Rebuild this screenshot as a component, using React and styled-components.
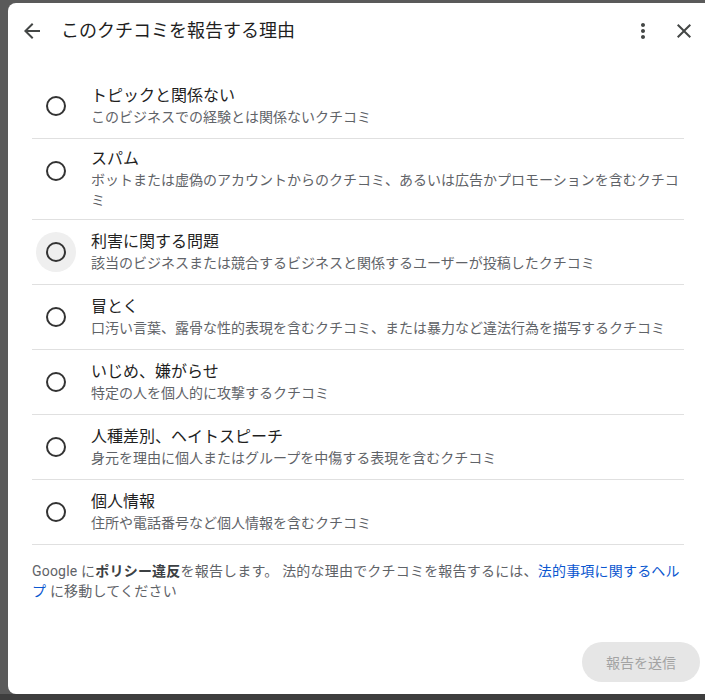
import React, {useState} from "react";
import styled, {createGlobalStyle} from "styled-components";

const reasons = [
  {title: "トピックと関係ない", desc: "このビジネスでの経験とは関係ないクチコミ"},
  {
    title: "スパム",
    desc: "ボットまたは虚偽のアカウントからのクチコミ、あるいは広告かプロモーションを含むクチコミ",
  },
  {
    title: "利害に関する問題",
    desc: "該当のビジネスまたは競合するビジネスと関係するユーザーが投稿したクチコミ",
  },
  {
    title: "冒とく",
    desc: "口汚い言葉、露骨な性的表現を含むクチコミ、または暴力など違法行為を描写するクチコミ",
  },
  {title: "いじめ、嫌がらせ", desc: "特定の人を個人的に攻撃するクチコミ"},
  {
    title: "人種差別、ヘイトスピーチ",
    desc: "身元を理由に個人またはグループを中傷する表現を含むクチコミ",
  },
  {title: "個人情報", desc: "住所や電話番号など個人情報を含むクチコミ"},
];

export default function App() {
  const [selected, setSelected] = useState(null);
  /** 3番目の行はホバー中の見た目 */
  const hovered = 2;

  return (
    <>
      <GlobalStyle />
      <Backdrop>
        <Dialog>
          <Header>
            <IconButton aria-label="戻る">
              <svg width="24" height="24" viewBox="0 0 24 24">
                <path
                  fill="#444746"
                  d="M20 11H7.83l5.59-5.59L12 4l-8 8 8 8 1.41-1.41L7.83 13H20v-2z"
                />
              </svg>
            </IconButton>
            <Title>このクチコミを報告する理由</Title>
            <IconButton aria-label="その他">
              <svg width="24" height="24" viewBox="0 0 24 24">
                <path
                  fill="#444746"
                  d="M12 8c1.1 0 2-.9 2-2s-.9-2-2-2-2 .9-2 2 .9 2 2 2zm0 2c-1.1 0-2 .9-2 2s.9 2 2 2 2-.9 2-2-.9-2-2-2zm0 6c-1.1 0-2 .9-2 2s.9 2 2 2 2-.9 2-2-.9-2-2-2z"
                />
              </svg>
            </IconButton>
            <IconButton aria-label="閉じる">
              <svg width="24" height="24" viewBox="0 0 24 24">
                <path
                  fill="#444746"
                  d="M19 6.41L17.59 5 12 10.59 6.41 5 5 6.41 10.59 12 5 17.59 6.41 19 12 13.41 17.59 19 19 17.59 13.41 12z"
                />
              </svg>
            </IconButton>
          </Header>

          <Body>
            <List>
              {reasons.map((r, i) => (
                <Row key={r.title} onClick={() => setSelected(i)}>
                  <RadioBox $hover={i === hovered}>
                    <RadioCircle $checked={selected === i} />
                  </RadioBox>
                  <TextBlock>
                    <ItemTitle>{r.title}</ItemTitle>
                    <ItemDesc>{r.desc}</ItemDesc>
                  </TextBlock>
                </Row>
              ))}
            </List>
            <Notice>
              Google に<b>ポリシー違反</b>を報告します。
              法的な理由でクチコミを報告するには、
              <Link href="#">法的事項に関するヘルプ</Link> に移動してください
            </Notice>
          </Body>

          <Actions>
            <SubmitButton disabled={selected === null}>報告を送信</SubmitButton>
          </Actions>
        </Dialog>
      </Backdrop>
    </>
  );
}

const GlobalStyle = createGlobalStyle`
  html, body {
    margin: 0;
    padding: 0;
    overflow: hidden;
    background: #5a5a5a;
  }
  body {
    font-family: Roboto, "Noto Sans CJK JP", sans-serif;
  }
`;

const Backdrop = styled.div`
  width: 705px;
  height: 700px;
  overflow: hidden;
  background: linear-gradient(#5a5a5a 0, #5a5a5a 694px, #3e3e3e 694px);
`;

const Dialog = styled.div`
  margin: 3px 0 0 8px;
  width: 708px;
  height: 691px;
  box-sizing: border-box;
  background: #fff;
  border-radius: 8px;
  display: flex;
  flex-direction: column;
  padding-bottom: 12px;
`;

const Header = styled.div`
  height: 56px;
  display: flex;
  align-items: center;
  padding: 0 12px 0 4px;
  flex-shrink: 0;
`;

const IconButton = styled.button`
  width: 40px;
  height: 40px;
  border: none;
  background: none;
  padding: 0;
  display: flex;
  align-items: center;
  justify-content: center;
  border-radius: 50%;
  cursor: pointer;
  flex-shrink: 0;
  & + & {
    margin-left: 1px;
  }
`;

const Title = styled.div`
  flex: 1;
  margin-left: 9px;
  font-size: 18px;
  line-height: 24px;
  color: #1f1f1f;
`;

const Body = styled.div`
  padding: 15px 32px 0 24px;
`;

const List = styled.div`
  display: flex;
  flex-direction: column;
`;

const Row = styled.label`
  display: flex;
  align-items: flex-start;
  border-bottom: 1px solid #e0e0e0;
  padding-left: 4px;
  cursor: pointer;
`;

const RadioBox = styled.div`
  width: 40px;
  height: 40px;
  margin-top: 12px;
  border-radius: 50%;
  display: flex;
  align-items: center;
  justify-content: center;
  flex-shrink: 0;
  background: ${(props) => (props.$hover ? "#efefef" : "transparent")};
`;

const RadioCircle = styled.div`
  width: 16px;
  height: 16px;
  border-radius: 50%;
  border: 2px solid ${(props) => (props.$checked ? "#0b57d0" : "#333")};
  box-shadow: ${(props) => (props.$checked ? "inset 0 0 0 3px #fff, inset 0 0 0 8px #0b57d0" : "none")};
`;

const TextBlock = styled.div`
  flex: 1;
  min-height: 64px;
  box-sizing: border-box;
  padding: 9px 0;
  margin-left: 15px;
  display: flex;
  flex-direction: column;
  justify-content: center;
`;

const ItemTitle = styled.div`
  font-size: 16px;
  line-height: 22px;
  color: #1f1f1f;
`;

const ItemDesc = styled.div`
  font-size: 14px;
  line-height: 20px;
  color: #5f6368;
`;

const Notice = styled.p`
  margin: 16px 0 0;
  font-size: 14px;
  line-height: 20px;
  letter-spacing: 0.2px;
  color: #5f6368;
  b {
    font-weight: 700;
    color: #3c4043;
  }
`;

const Link = styled.a`
  color: #0b57d0;
  text-decoration: none;
`;

const Actions = styled.div`
  margin-top: auto;
  display: flex;
  justify-content: flex-end;
  padding-right: 16px;
`;

const SubmitButton = styled.button`
  height: 40px;
  padding: 0 24px;
  border: none;
  border-radius: 20px;
  font-family: Roboto, "Noto Sans CJK JP", sans-serif;
  font-size: 14px;
  background: ${(props) => (props.disabled ? "#e6e6e6" : "#0b57d0")};
  color: ${(props) => (props.disabled ? "#a3a3a3" : "#fff")};
  cursor: ${(props) => (props.disabled ? "default" : "pointer")};
`;
